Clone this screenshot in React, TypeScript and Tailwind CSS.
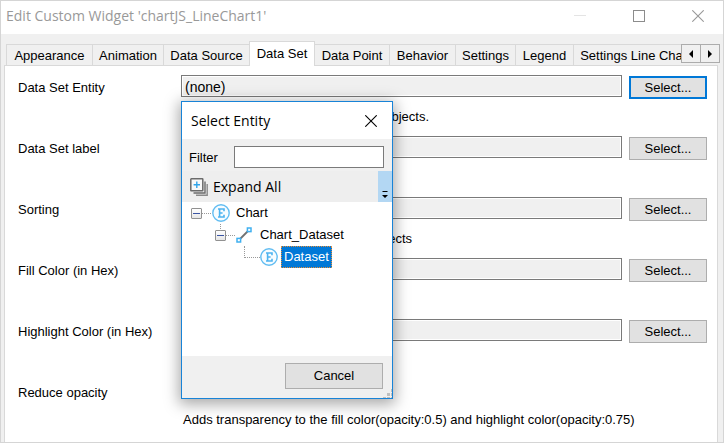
import React from "react";

const tabs = [
  { name: "Appearance", width: "w-[86px]" },
  { name: "Animation", width: "w-[71px]" },
  { name: "Data Source", width: "w-[86px]" },
  { name: "Data Set", width: "w-[66px]" },
  { name: "Data Point", width: "w-[74px]" },
  { name: "Behavior", width: "w-[66px]" },
  { name: "Settings", width: "w-[60px]" },
  { name: "Legend", width: "w-[58px]" },
  { name: "Settings Line Chart", width: "w-[124px]" },
];

type Field = {
  id: string;
  label: string;
  value?: string;
  help?: string;
  helpWidth?: string;
  focused?: boolean;
};

const fields: Field[] = [
  { id: "entity", label: "Data Set Entity", value: "(none)", help: "objects.", helpWidth: "w-[248px]", focused: true },
  { id: "label", label: "Data Set label", value: "" },
  { id: "sorting", label: "Sorting", value: "", help: "objects", helpWidth: "w-[231px]" },
  { id: "fill", label: "Fill Color (in Hex)", value: "" },
  { id: "highlight", label: "Highlight Color (in Hex)", value: "" },
];

function CloseIcon({ className }: { className: string }) {
  return (
    <svg viewBox="0 0 12 12" className={className} aria-hidden="true">
      <path d="M.3.3l11.4 11.4M11.7.3L.3 11.7" stroke="currentColor" strokeWidth="1.1" fill="none" />
    </svg>
  );
}

function TitleBar() {
  return (
    <header className="flex h-[33px] shrink-0 items-center bg-white pr-[19px] pb-1 pl-[5px]">
      <h1 className="min-w-0 flex-1 truncate font-['Open_Sans','Noto_Sans',sans-serif] text-sm leading-5 text-[#999]">
        Edit Custom Widget 'chartJS_LineChart1'
      </h1>
      <div className="flex items-center gap-[47px] text-[#999]">
        <button type="button" aria-label="Minimize" className="flex size-3 items-center justify-center">
          <span className="h-px w-3 bg-[#e4e4e4]" />
        </button>
        <button type="button" aria-label="Maximize" className="size-3 border border-[#8c8c8c]" />
        <button type="button" aria-label="Close" className="size-3">
          <CloseIcon className="size-3" />
        </button>
      </div>
    </header>
  );
}

function TabStrip() {
  return (
    <div className="flex h-[31px] shrink-0 items-end pr-[3px] pl-[5px]">
      <div role="tablist" className="flex h-[31px] min-w-0 flex-1 items-end overflow-x-clip">
        {tabs.map((tab, i) => {
          const selected = tab.name === "Data Set";
          return (
            <button
              key={tab.name}
              type="button"
              role="tab"
              aria-selected={selected}
              className={
                selected
                  ? `${tab.width} relative z-10 -mb-px h-[25px] shrink-0 border border-b-0 border-[#d9d9d9] bg-white pb-px whitespace-nowrap`
                  : `${tab.width} h-[21px] shrink-0 border-t border-[#d9d9d9] pt-px whitespace-nowrap ${
                      i === 4 ? "" : "border-l"
                    }`
              }
            >
              {tab.name}
            </button>
          );
        })}
      </div>
      <div className="mb-[2px] flex h-[19px]">
        <button type="button" aria-label="Scroll tabs left" className="flex w-5 items-center justify-center border border-[#acacac]">
          <svg viewBox="0 0 4 8" className="h-2 w-1" aria-hidden="true">
            <path d="M4 0v8L0 4z" />
          </svg>
        </button>
        <button type="button" aria-label="Scroll tabs right" className="-ml-px flex w-5 items-center justify-center border border-[#acacac]">
          <svg viewBox="0 0 4 8" className="h-2 w-1" aria-hidden="true">
            <path d="M0 0v8l4-4z" />
          </svg>
        </button>
      </div>
    </div>
  );
}

function FieldRow({ field }: { field: Field }) {
  return (
    <div className="grid h-[61px] grid-cols-[163px_1fr_78px]">
      <label htmlFor={field.id} className="h-[26px] leading-[26px]">
        {field.label}
      </label>
      <div className="pr-[7px]">
        <input
          id={field.id}
          readOnly
          defaultValue={field.value}
          className="block h-[22px] w-full border border-[#7a7a7a] bg-[#f0f0f0] px-[3px] pt-px text-sm shadow-[inset_0_0_0_1px_#fff] outline-none"
        />
        {field.help && <p className={`${field.helpWidth} mt-3 text-right leading-4`}>{field.help}</p>}
      </div>
      <button
        type="button"
        className={`mt-px h-[23px] bg-[#e1e1e1] ${
          field.focused ? "border-2 border-[#0078d7]" : "border border-[#adadad]"
        }`}
      >
        Select...
      </button>
    </div>
  );
}

function Expander() {
  return (
    <button type="button" aria-label="Collapse" className="flex size-[11px] items-center justify-center rounded-[1px] border border-[#919191] bg-linear-to-b from-white to-[#e6e6e6]">
      <span className="h-px w-[7px] bg-[#3a55a4]" />
    </button>
  );
}

function EntityIcon() {
  return (
    <svg viewBox="0 0 18 18" className="size-[18px]" aria-hidden="true" fill="none">
      <circle cx="9" cy="9" r="8.2" fill="#f7fcff" stroke="#62bdf2" strokeWidth="1.4" />
      <path d="M6 5h6v2.2M6 13h6v-2.2M7.6 5v8M7.6 9h3" stroke="#4db3f0" strokeWidth="1.6" />
    </svg>
  );
}

function AssociationIcon() {
  return (
    <svg viewBox="0 0 16 16" className="size-4" aria-hidden="true" fill="none">
      <path d="M4 12l8-8" stroke="#707070" strokeWidth="1.8" />
      <rect x="1" y="11.4" width="3.6" height="3.6" fill="#fff" stroke="#3fb0f0" strokeWidth="1.5" />
      <rect x="11.4" y="1" width="3.6" height="3.6" fill="#fff" stroke="#3fb0f0" strokeWidth="1.5" />
    </svg>
  );
}

function ExpandAllIcon() {
  return (
    <svg viewBox="0 0 18 18" className="size-[18px]" aria-hidden="true" fill="none">
      <path d="M6 17.2h11.2V6" stroke="#8a8a8a" strokeWidth="1.4" />
      <path d="M3.5 15h11.5V3.5" stroke="#6b6b6b" strokeWidth="1.4" />
      <rect x=".8" y=".8" width="12" height="12" rx=".5" fill="#f8f8f8" stroke="#6b6b6b" strokeWidth="1.5" />
      <path d="M6.8 3.6v6.4M3.6 6.8h6.4" stroke="#2fa4ea" strokeWidth="1.4" />
    </svg>
  );
}

function EntityTree() {
  return (
    <ul role="tree" className="flex-1 bg-white">
      <li role="treeitem" className="flex h-[22px] items-center pl-[9px]">
        <Expander />
        <span className="mr-px w-[9px] border-t border-dotted border-[#999]" />
        <EntityIcon />
        <span className="pl-[6px]">Chart</span>
      </li>
      <li role="treeitem" className="flex h-[22px] items-center pl-[33px]">
        <span className="mb-[15px] -ml-px h-[7px] w-px translate-x-[6px] border-l border-dotted border-[#999]" />
        <Expander />
        <span className="mr-px w-[9px] border-t border-dotted border-[#999]" />
        <AssociationIcon />
        <span className="pl-2">Chart_Dataset</span>
      </li>
      <li role="treeitem" aria-selected="true" className="flex h-[22px] items-center pl-[62px]">
        <span className="mb-[10px] h-3 w-4 border-b border-l border-dotted border-[#999]" />
        <EntityIcon />
        <span className="ml-[3px] border border-dotted border-[#e58e3a] bg-[#0078d7] px-[2px] leading-5 text-white">Dataset</span>
      </li>
    </ul>
  );
}

function SelectEntityDialog() {
  return (
    <section
      role="dialog"
      aria-label="Select Entity"
      className="absolute top-[100px] left-[180px] z-20 flex h-[298px] w-[212px] flex-col border border-[#1883d7] bg-[#f0f0f0] shadow-[0_3px_14px_2px_rgba(0,0,0,0.35)]"
    >
      <div className="flex h-[37px] items-center justify-between bg-white pr-[15px] pl-[9px]">
        <h2 className="font-['Open_Sans','Noto_Sans',sans-serif] text-sm leading-5">Select Entity</h2>
        <button type="button" aria-label="Close dialog" className="size-3">
          <CloseIcon className="size-3" />
        </button>
      </div>
      <div className="flex h-8 items-center pr-2 pl-[7px]">
        <label htmlFor="filter" className="w-[45px] pt-[5px]">
          Filter
        </label>
        <input id="filter" className="mt-[3px] h-[22px] min-w-0 flex-1 border border-[#7a7a7a] bg-white px-1 outline-none" />
      </div>
      <div className="flex h-[31px] bg-[#eee]">
        <button type="button" className="flex flex-1 items-center gap-[5px] pl-2 font-['Open_Sans','Noto_Sans',sans-serif] text-sm">
          <ExpandAllIcon />
          <span>Expand All</span>
        </button>
        <button type="button" aria-label="Toolbar options" className="flex w-[14px] items-end justify-center bg-[#b3d7f3] pb-1">
          <svg viewBox="0 0 6 7" className="h-[7px] w-[6px]" aria-hidden="true">
            <path d="M.5 0h5v1h-5zM0 4h6L3 7z" />
          </svg>
        </button>
      </div>
      <EntityTree />
      <div className="relative flex h-[42px] items-start justify-end pt-[7px] pr-[9px]">
        <button type="button" className="h-[26px] w-[98px] border border-[#adadad] bg-[#e1e1e1]">
          Cancel
        </button>
        <svg viewBox="0 0 9 9" className="absolute right-0 bottom-0 size-[9px]" fill="#bfbfbf" aria-hidden="true">
          <path d="M8 0h1v3H8zM4 4h3v3H4zM8 4h1v3H8zM0 8h3v1H0zM4 8h3v1H4zM8 8h1v1H8z" />
        </svg>
      </div>
    </section>
  );
}

export default function App() {
  return (
    <main className="relative flex min-h-screen flex-col border border-[#d5d5d5] bg-[#f0f0f0] font-['Liberation_Sans',Arial,sans-serif] text-[13px] text-black">
      <TitleBar />
      <TabStrip />
      <form className="mr-[5px] ml-[3px] flex-1 border border-b-0 border-[#d9d9d9] bg-white pt-[9px] pr-[10px] pl-[13px]">
        {fields.map((field) => (
          <FieldRow key={field.id} field={field} />
        ))}
        <div className="grid grid-cols-[163px_1fr]">
          <p className="h-[26px] leading-[26px]">Reduce opacity</p>
          <p className="mt-8 pl-[2px] leading-4">
            Adds transparency to the fill color(opacity:0.5) and highlight color(opacity:0.75)
          </p>
        </div>
      </form>
      <SelectEntityDialog />
    </main>
  );
}
